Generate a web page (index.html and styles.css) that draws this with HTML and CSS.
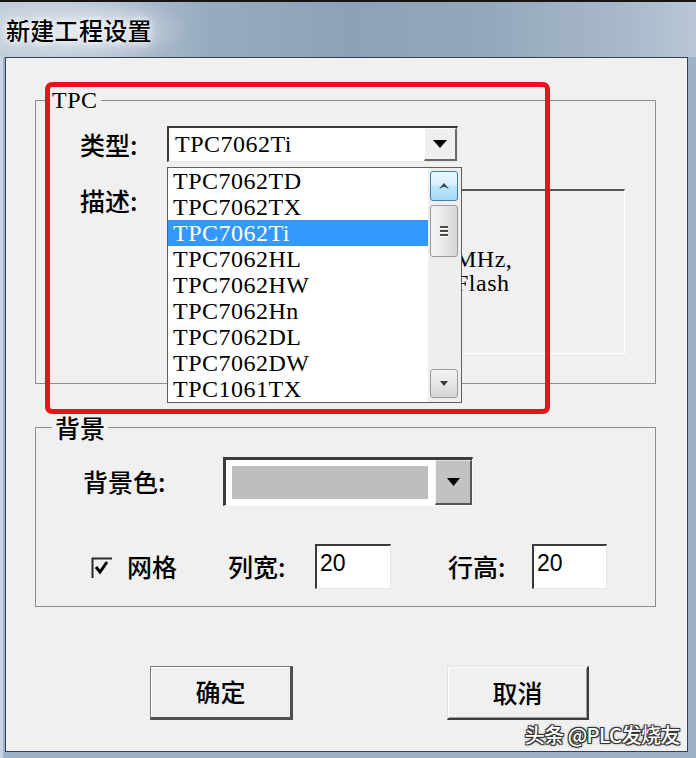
FILE: index.html
```html
<!DOCTYPE html>
<html lang="zh-CN">
<head>
<meta charset="utf-8">
<title>新建工程设置</title>
<link rel="stylesheet" href="styles.css">
</head>
<body>
<div class="window">
  <div class="titlebar"><span class="title">新建工程设置</span></div>
  <div class="client">
    <fieldset class="group group-tpc">
      <legend class="legend mono">TPC</legend>
      <div class="tpc-body">
        <div class="row-type">
          <span class="label">类型:</span>
          <div class="combo">
            <span class="combo-text mono">TPC7062Ti</span>
            <span class="combo-btn"><svg width="14" height="8" viewBox="0 0 14 8"><polygon points="0,0 14,0 7,8" fill="#000"/></svg></span>
            <div class="droplist">
              <ul class="items mono">
                <li>TPC7062TD</li>
                <li>TPC7062TX</li>
                <li class="selected">TPC7062Ti</li>
                <li>TPC7062HL</li>
                <li>TPC7062HW</li>
                <li>TPC7062Hn</li>
                <li>TPC7062DL</li>
                <li>TPC7062DW</li>
                <li>TPC1061TX</li>
              </ul>
              <div class="vscroll">
                <div class="sb-btn sb-up"><svg width="10" height="6" viewBox="0 0 10 6"><polygon points="0,6 5,0 10,6 5,3.5" fill="#2d3b52"/></svg></div>
                <div class="sb-thumb"><span class="grip"></span><span class="grip"></span><span class="grip"></span></div>
                <div class="sb-track"></div>
                <div class="sb-btn sb-down"><svg width="8" height="5" viewBox="0 0 8 5"><polygon points="0,0 8,0 4,5" fill="#3a3a3a"/></svg></div>
              </div>
            </div>
          </div>
        </div>
        <div class="row-desc">
          <span class="label">描述:</span>
          <div class="desc mono"><span class="desc-line">MHz,</span><span class="desc-line">Flash</span></div>
        </div>
      </div>
    </fieldset>

    <fieldset class="group group-bg">
      <legend class="legend legend-cjk">背景</legend>
      <div class="bg-body">
        <div class="row-color">
          <span class="label label-wide">背景色:</span>
          <div class="color-combo">
            <span class="swatch"></span>
            <span class="color-btn"><svg width="13" height="8" viewBox="0 0 13 8"><polygon points="0,0 13,0 6.5,8" fill="#000"/></svg></span>
          </div>
        </div>
        <div class="row-grid">
          <span class="chk"><svg width="21" height="21" viewBox="0 0 21 21"><path d="M1.5 21 V1.5 H21" fill="none" stroke="#2a2a2a" stroke-width="2"/><polyline points="5,10 9,15 16,5" fill="none" stroke="#000" stroke-width="3"/></svg></span>
          <span class="txt txt-grid">网格</span>
          <span class="txt txt-colw">列宽:</span>
          <span class="num">20</span>
          <span class="txt txt-rowh">行高:</span>
          <span class="num">20</span>
        </div>
      </div>
    </fieldset>

    <div class="buttons">
      <button class="btn btn-ok">确定</button>
      <button class="btn btn-cancel">取消</button>
    </div>
  </div>
  <div class="annot"></div>
  <div class="watermark">头条 @PLC发烧友</div>
</div>
</body>
</html>
```

FILE: styles.css
```css
* { box-sizing: border-box; }
html, body { margin: 0; padding: 0; }
body {
  width: 696px;
  height: 758px;
  overflow: hidden;
  font-family: "Noto Sans CJK SC", "Noto Sans", sans-serif;
  font-weight: 500;
  color: #000;
  background: #a8bcd0;
}
.mono {
  font-family: "Liberation Serif", "Noto Sans CJK SC", serif;
  font-weight: 400;
  font-size: 24px;
  letter-spacing: 0.5px;
}
.window {
  position: relative;
  width: 696px;
  height: 758px;
  display: flex;
  flex-direction: column;
  background: linear-gradient(90deg, #c6d6e6 0, #c6d6e6 3px, #9db2c8 3px, #9db2c8 100%);
}
.titlebar {
  flex: none;
  height: 57px;
  border-top: 2px solid #151515;
  display: flex;
  align-items: center;
  padding-left: 6px;
  background:
    radial-gradient(ellipse 110px 34px at 80px 28px, rgba(226,233,240,0.95), rgba(226,233,240,0) 100%),
    linear-gradient(90deg, #c3ced9 0px, #b3c1cf 110px, #97abc0 210px, #8da2b8 350px, #93a7bc 480px, #a8b8c9 620px, #b9c7d5 696px);
}
.title {
  font-size: 24px;
  line-height: 28px;
  letter-spacing: 0.3px;
  text-shadow: 0 0 6px rgba(255,255,255,0.9), 0 0 12px rgba(255,255,255,0.8);
}
.client {
  flex: 1;
  margin: 0 8px 6px 5px;
  border: 1px solid #36414d;
  background: #f0f0f0;
}
.group {
  margin: 0 0 0 29px;
  width: 621px;
  padding: 0;
  border: 1px solid #8e8e8e;
  min-width: 0;
}
.legend {
  padding: 0 3px;
  line-height: 26px;
}
.group-tpc { margin-top: 29px; }
.group-tpc .legend { margin-left: 13px; }
.group-bg { margin-top: 30px; }
.legend-cjk { margin-left: 16px; font-size: 25px; }

.tpc-body {
  padding: 13px 0 29px 44px;
  display: flex;
  flex-direction: column;
  gap: 27px;
}
.label {
  flex: none;
  width: 87px;
  font-size: 25px;
  line-height: 26px;
}
.row-type {
  display: flex;
  align-items: center;
  height: 36px;
}
.combo {
  position: relative;
  width: 291px;
  height: 36px;
  display: flex;
  background: #fff;
  border-top: 2px solid #3a3a3a;
  border-left: 2px solid #3a3a3a;
  border-right: 1px solid #e4e4e4;
  border-bottom: 1px solid #e4e4e4;
}
.combo-text {
  flex: 1;
  padding-left: 6px;
  line-height: 32px;
}
.combo-btn {
  flex: none;
  width: 33px;
  background: #efefef;
  border-top: 1px solid #fff;
  border-left: 1px solid #fff;
  border-right: 2px solid #6a6a6a;
  border-bottom: 2px solid #6a6a6a;
  display: flex;
  align-items: center;
  justify-content: center;
}
.droplist {
  position: absolute;
  left: -2px;
  top: 39px;
  width: 295px;
  height: 236px;
  border: 1px solid #5e5e5e;
  background: #fff;
  display: flex;
  z-index: 2;
}
.items {
  list-style: none;
  margin: 0;
  padding: 0;
  width: 260px;
  flex: none;
}
.items li {
  height: 26px;
  line-height: 26px;
  padding-left: 5px;
  white-space: nowrap;
}
.items li.selected {
  background: #3399ff;
  color: #fff;
}
.vscroll {
  flex: none;
  width: 33px;
  background: #eeeeee;
  display: flex;
  flex-direction: column;
  padding: 3px 3px 4px 2px;
}
.sb-btn {
  flex: none;
  border-radius: 3px;
  display: flex;
  align-items: center;
  justify-content: center;
}
.sb-up {
  height: 30px;
  border: 1px solid #3c7fb1;
  background: linear-gradient(180deg, #eaf6fd 0%, #d9f0fc 45%, #bee6fd 50%, #a7d9f5 100%);
}
.sb-thumb {
  flex: none;
  height: 52px;
  margin-top: 4px;
  border: 1px solid #9a9a9a;
  border-radius: 3px;
  background: linear-gradient(90deg, #f4f4f4 0%, #e8e8e8 50%, #d6d6d6 100%);
  display: flex;
  flex-direction: column;
  align-items: center;
  justify-content: center;
  gap: 2px;
}
.grip {
  display: block;
  width: 8px;
  height: 2px;
  background: #4a4a4a;
  box-shadow: 0 1px 0 #fff;
}
.sb-track { flex: 1; }
.sb-down {
  height: 29px;
  border: 1px solid #9c9c9c;
  background: linear-gradient(180deg, #f4f4f4 0%, #e6e6e6 50%, #d4d4d4 100%);
}
.row-desc {
  display: flex;
  align-items: flex-start;
}
.row-desc .label { margin-top: -2px; }
.desc {
  width: 458px;
  height: 165px;
  border-top: 2px solid #555;
  border-left: 2px solid #555;
  border-right: 1px solid #fff;
  border-bottom: 1px solid #fff;
  padding: 56px 0 0 286px;
  line-height: 24px;
  display: flex;
  flex-direction: column;
  align-items: flex-start;
}
.desc-line { white-space: nowrap; }

.bg-body {
  padding: 17px 0 17px 47px;
}
.row-color {
  display: flex;
  align-items: center;
}
.label-wide { width: 140px; margin-top: -2px; }
.color-combo {
  width: 250px;
  height: 49px;
  display: flex;
  background: #fff;
  border-top: 3px solid #3c3c3c;
  border-left: 3px solid #3c3c3c;
  border-right: 1px solid #fafafa;
  border-bottom: 1px solid #fafafa;
}
.swatch {
  flex: 1;
  margin: 6px 7px 6px 6px;
  background: #bdbdbd;
}
.color-btn {
  flex: none;
  width: 37px;
  background: #c2c2c2;
  border-left: 1px solid #f4f4f4;
  border-top: 1px solid #e0e0e0;
  border-right: 2px solid #555;
  border-bottom: 2px solid #555;
  display: flex;
  align-items: center;
  justify-content: center;
}
.row-grid {
  margin-top: 38px;
  padding-left: 8px;
  display: flex;
  align-items: center;
  height: 45px;
}
.chk {
  flex: none;
  width: 36px;
  display: flex;
  align-items: center;
  height: 21px;
  margin-top: 1px;
}
.txt {
  flex: none;
  font-size: 25px;
  line-height: 26px;
  margin-top: -2px;
}
.txt-grid { width: 101px; }
.txt-colw { width: 87px; }
.txt-rowh { width: 84px; margin-left: 57px; }
.num {
  flex: none;
  width: 76px;
  height: 45px;
  background: #fff;
  border-top: 2px solid #3a3a3a;
  border-left: 2px solid #3a3a3a;
  border-right: 1px solid #e6e6e6;
  border-bottom: 1px solid #e6e6e6;
  font-family: "Liberation Sans", Arial, sans-serif;
  font-weight: 400;
  font-size: 23px;
  line-height: 34px;
  padding-left: 3px;
}
.num:last-child { width: 75px; }

.buttons {
  margin-top: 59px;
  padding-left: 144px;
  display: flex;
  gap: 154px;
}
.btn {
  width: 143px;
  height: 54px;
  padding: 0 0 2px 0;
  background: #f0f0f0;
  font-family: "Noto Sans CJK SC", sans-serif;
  font-weight: 500;
  font-size: 25px;
  color: #000;
  border-radius: 0;
}
.btn-ok {
  border-top: 1px solid #7a7a7a;
  border-left: 1px solid #7a7a7a;
  border-right: 3px solid #4f4f4f;
  border-bottom: 3px solid #4f4f4f;
  box-shadow: inset 1px 1px 0 #fff;
}
.btn-cancel {
  width: 142px;
  border-top: 1px solid #e2e2e2;
  border-left: 1px solid #e2e2e2;
  border-right: 2px solid #3c3c3c;
  border-bottom: 2px solid #3c3c3c;
  box-shadow: inset 1px 1px 0 #fff, inset -1px -1px 0 #a0a0a0;
}

.annot {
  position: absolute;
  left: 45px;
  top: 82px;
  width: 505px;
  height: 332px;
  border: 5px solid #e8141c;
  border-radius: 7px;
  pointer-events: none;
}
.watermark {
  position: absolute;
  right: 16px;
  bottom: 11px;
  font-size: 20px;
  line-height: 24px;
  color: #fff;
  letter-spacing: -0.5px;
  text-shadow: 1px 1px 0 #333, -1px -1px 0 #333, 1px -1px 0 #333, -1px 1px 0 #333, 0 0 3px #000;
}
```
